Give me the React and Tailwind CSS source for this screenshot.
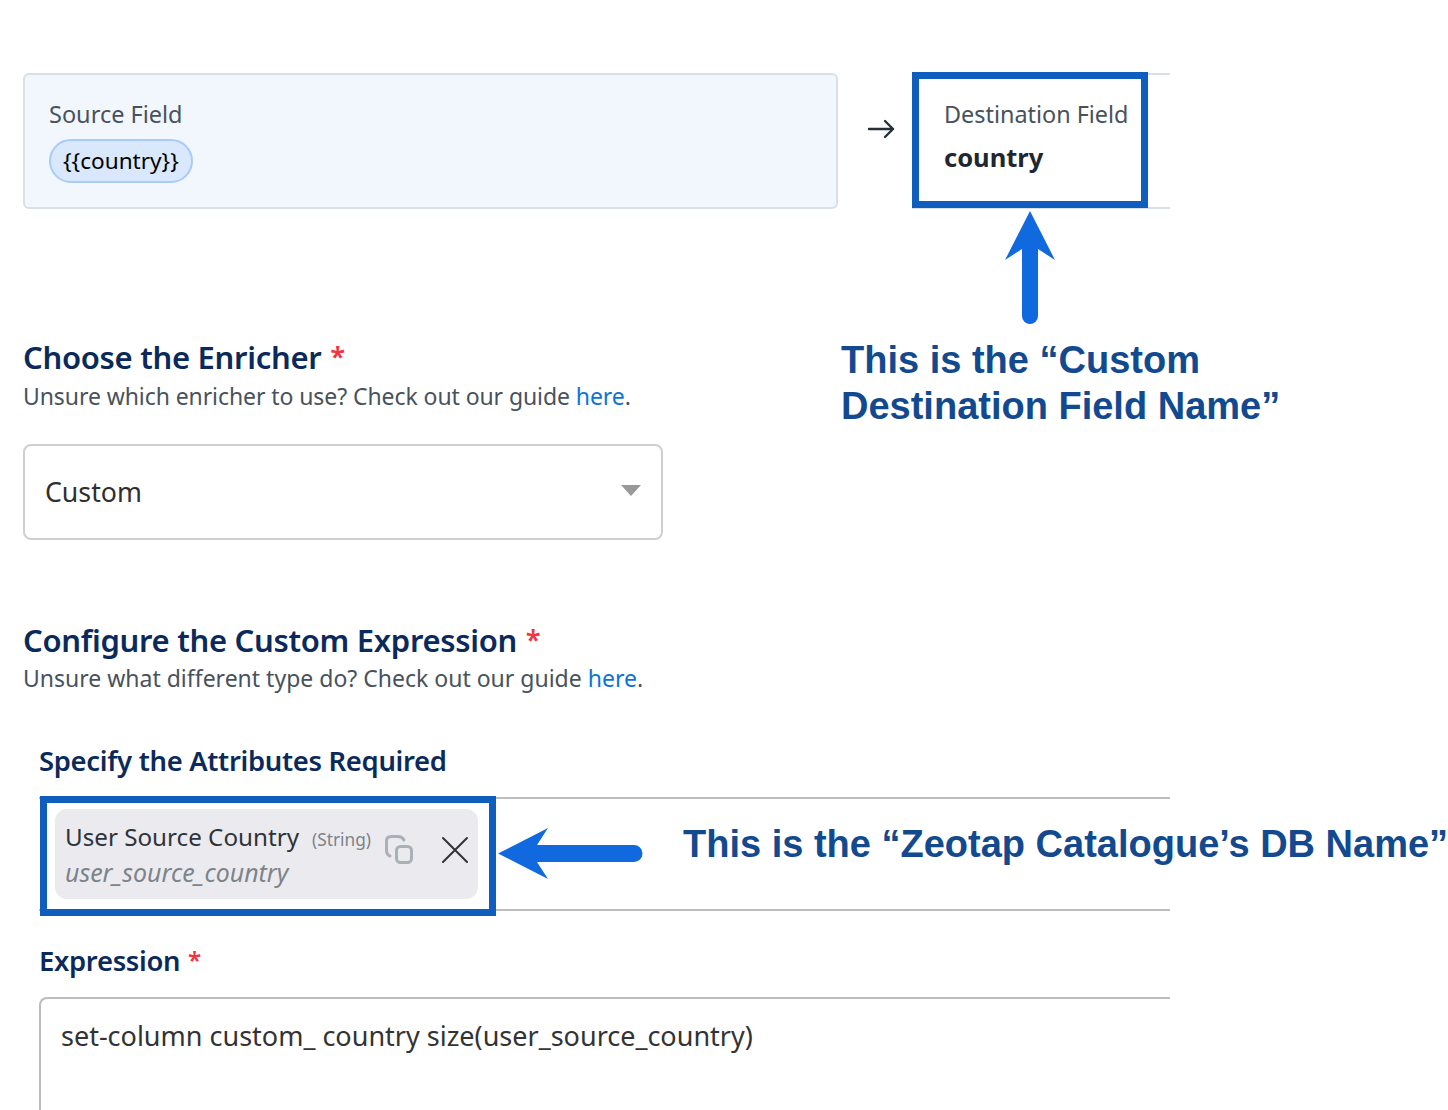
const font = "font-['Noto_Sans',sans-serif]";

function Heading({ children }) {
  return <h2 className="text-[31px] leading-[40px] font-semibold tracking-[-0.3px] text-[#0b2a5b]">{children}</h2>;
}

function Req() {
  return <span className="ml-[1px] align-[2px] text-[0.88em] leading-none font-semibold text-[#f5333f]">*</span>;
}

function CopyIcon() {
  return (
    <svg width="30" height="30" viewBox="0 0 30 30" fill="none" stroke="#a9b1b8" strokeWidth="3" strokeLinecap="round">
      <rect x="11.5" y="11.5" width="15" height="16" rx="4" />
      <path d="M5 21 C2.5 20 1.5 18 1.5 15 V6 C1.5 3 3 1.5 6 1.5 H13 C16 1.5 18 3 19 5" />
    </svg>
  );
}

function UpArrow() {
  return (
    <svg className="absolute left-[1005px] top-[210px]" width="50" height="116" viewBox="0 0 50 116">
      <path d="M25 1 L50 50 L33 39 V106 A8 8 0 0 1 17 106 V39 L0 50 Z" fill="#1169df" />
    </svg>
  );
}

function LeftArrow() {
  return (
    <svg className="absolute left-[498px] top-[828px]" width="146" height="51" viewBox="0 0 146 51">
      <path d="M0 25.5 L50 0 L39 17 H136 A8.5 8.5 0 0 1 136 34 H39 L50 51 Z" fill="#1169df" />
    </svg>
  );
}

export default function App() {
  return (
    <div className={`relative h-[1110px] w-[1448px] overflow-hidden bg-white ${font}`}>
      <div className="w-[1170px] overflow-hidden pl-[23px] pt-[73px]">
        {/* source -> destination */}
        <div className="flex h-[136px]">
          <div className="h-[136px] w-[815px] rounded-[6px] border-2 border-[#dadfe6] bg-[#f2f7fe] pl-[24px] pt-[23px]">
            <p className="text-[23.5px] leading-[32px] text-[#48525c]">Source Field</p>
            <span className="mt-[9px] inline-flex h-[44px] items-center rounded-full border-2 border-[#a8cbf8] bg-[#d9e8fd] px-[12px] text-[22.6px] text-black">
              {"{{country}}"}
            </span>
          </div>
          <div className="flex w-[74px] items-center justify-center pl-[12px]">
            <svg className="mb-[24px]" width="28" height="20" viewBox="0 0 28 20" fill="none" stroke="#27303a" strokeWidth="2.4" strokeLinecap="round" strokeLinejoin="round">
              <path d="M2 10 H26 M18 2 L26 10 L18 18" />
            </svg>
          </div>
          <div className="h-[136px] flex-1 border-y-2 border-[#dadfe6] pl-[32px] pt-[23px]">
            <p className="text-[23.4px] leading-[32px] text-[#48525c]">Destination Field</p>
            <p className="mt-[9px] text-[25.5px] leading-[36px] font-bold text-[#1f2730]">country</p>
          </div>
        </div>

        {/* enricher */}
        <div className="mt-[128px]">
          <Heading>
            Choose the Enricher <Req />
          </Heading>
          <p className="mt-[3px] text-[23px] leading-[32px] tracking-[-0.08px] text-[#48525c]">
            Unsure which enricher to use? Check out our guide <span className="text-[#0a75d8]">here</span>.
          </p>
          <div className="mt-[32px] flex h-[96px] w-[640px] items-center justify-between rounded-[8px] border-2 border-[#cfcfcf] pl-[20px] pr-[20px]">
            <span className="text-[26.7px] text-[#2f2f2f]">Custom</span>
            <span className="mb-[4px] h-0 w-0 border-x-[10px] border-t-[11px] border-x-transparent border-t-[#999999]" />
          </div>
        </div>

        {/* custom expression */}
        <div className="mt-[80px]">
          <Heading>
            Configure the Custom Expression <Req />
          </Heading>
          <p className="mt-[2px] text-[23px] leading-[32px] text-[#48525c]">
            Unsure what different type do? Check out our guide <span className="text-[#0a75d8]">here</span>.
          </p>
        </div>

        <div className="mt-[49px] pl-[16px]">
          <h3 className="text-[27.4px] leading-[36px] font-semibold tracking-[-0.3px] text-[#0b2a5b]">Specify the Attributes Required</h3>
          <div className="mt-[18px] h-[114px] border-y-2 border-[#bdbdc0] pl-[16px] pt-[10px]">
            <div className="flex h-[90px] w-[423px] items-center justify-between rounded-[12px] bg-[#ebebef] pl-[10px] pr-[8px]">
              <div>
                <p className="flex items-baseline gap-[13px] text-[24.2px] leading-[32px] text-[#2f3338]">
                  User Source Country <span className="text-[17.3px] text-[#7d838a]">(String)</span>
                </p>
                <p className="text-[24.9px] leading-[32px] italic text-[#7d838a]">user_source_country</p>
              </div>
              <div className="mb-[9px] flex items-center gap-[25px]">
                <CopyIcon />
                <svg width="30" height="30" viewBox="0 0 30 30" stroke="#333333" strokeWidth="2" strokeLinecap="round">
                  <path d="M3 3 L27 27 M27 3 L3 27" />
                </svg>
              </div>
            </div>
          </div>

          <h3 className="mt-[32px] text-[27.4px] leading-[36px] font-semibold tracking-[-0.3px] text-[#0b2a5b]">
            Expression <Req />
          </h3>
          <div className="mt-[18px] h-[140px] rounded-tl-[8px] border-l-2 border-t-2 border-[#bdbdc0] pl-[20px] pt-[19px]">
            <p className="text-[27px] leading-[36px] text-[#333333]">set-column custom_ country size(user_source_country)</p>
          </div>
        </div>
      </div>

      {/* annotations on top of the screenshot */}
      <div className="absolute left-[912px] top-[72px] h-[136px] w-[236px] border-[7px] border-[#0f5dbd]" />
      <div className="absolute left-[40px] top-[796px] h-[120px] w-[456px] border-[7px] border-[#0f5dbd]" />
      <UpArrow />
      <LeftArrow />
      <p className="absolute left-[841px] top-[337px] whitespace-nowrap font-['Liberation_Sans',sans-serif] text-[38px] leading-[46px] font-bold text-[#134a8f]">
        This is the “Custom
        <br />
        Destination Field Name”
      </p>
      <p className="absolute left-[683px] top-[821px] whitespace-nowrap font-['Liberation_Sans',sans-serif] text-[38px] leading-[46px] font-bold text-[#134a8f]">
        This is the “Zeotap Catalogue’s DB Name”
      </p>
    </div>
  );
}
